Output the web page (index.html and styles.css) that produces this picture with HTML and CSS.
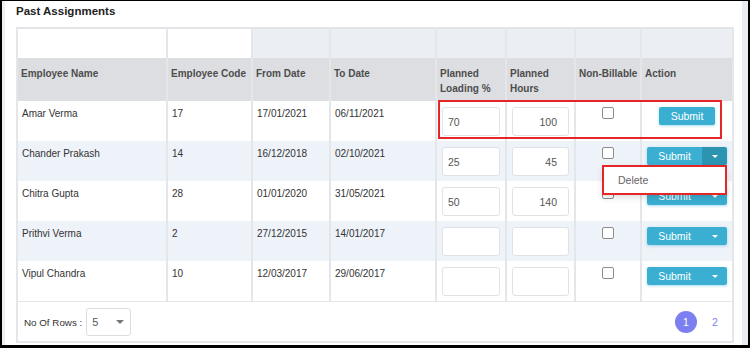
FILE: index.html
```html
<!DOCTYPE html>
<html lang="en">
<head>
  <meta charset="UTF-8">
  <meta name="viewport" content="width=device-width, initial-scale=1.0">
  <title>Past Assignments</title>
  <link rel="stylesheet" href="styles.css">
</head>
<body>
  <div class="frame">
    <div class="edge-left"></div>

    <main class="panel">
      <h2 class="title">Past Assignments</h2>

      <div class="grid-wrap">
        <table class="grid">
          <colgroup>
            <col style="width:150px">
            <col style="width:85px">
            <col style="width:78px">
            <col style="width:106px">
            <col style="width:70px">
            <col style="width:69px">
            <col style="width:66px">
            <col style="width:92px">
          </colgroup>
          <thead>
            <tr class="filter-row">
              <th class="blank"></th>
              <th class="blank"></th>
              <th></th>
              <th></th>
              <th></th>
              <th></th>
              <th></th>
              <th></th>
            </tr>
            <tr class="head-row">
              <th>Employee Name</th>
              <th class="nowrap">Employee Code</th>
              <th>From Date</th>
              <th>To Date</th>
              <th>Planned Loading %</th>
              <th>Planned Hours</th>
              <th class="nowrap">Non-Billable</th>
              <th>Action</th>
            </tr>
          </thead>
          <tbody>
            <tr>
              <td>Amar Verma</td>
              <td>17</td>
              <td>17/01/2021</td>
              <td>06/11/2021</td>
              <td class="in-cell"><input class="field" type="text" value="70"></td>
              <td class="in-cell"><input class="field field-right" type="text" value="100"></td>
              <td class="center"><input class="check" type="checkbox"></td>
              <td class="center"><button class="btn btn-single">Submit</button></td>
            </tr>
            <tr>
              <td>Chander Prakash</td>
              <td>14</td>
              <td>16/12/2018</td>
              <td>02/10/2021</td>
              <td class="in-cell"><input class="field" type="text" value="25"></td>
              <td class="in-cell"><input class="field field-right" type="text" value="45"></td>
              <td class="center"><input class="check" type="checkbox"></td>
              <td class="center">
                <div class="split split-open">
                  <button class="btn btn-main">Submit</button>
                  <button class="btn btn-caret"><span class="caret"></span></button>
                  <div class="menu">
                    <div class="menu-item">Delete</div>
                  </div>
                </div>
              </td>
            </tr>
            <tr>
              <td>Chitra Gupta</td>
              <td>28</td>
              <td>01/01/2020</td>
              <td>31/05/2021</td>
              <td class="in-cell"><input class="field" type="text" value="50"></td>
              <td class="in-cell"><input class="field field-right" type="text" value="140"></td>
              <td class="center"><input class="check" type="checkbox"></td>
              <td class="center">
                <div class="split">
                  <button class="btn btn-main">Submit</button>
                  <button class="btn btn-caret"><span class="caret"></span></button>
                </div>
              </td>
            </tr>
            <tr>
              <td>Prithvi Verma</td>
              <td>2</td>
              <td>27/12/2015</td>
              <td>14/01/2017</td>
              <td class="in-cell"><input class="field" type="text"></td>
              <td class="in-cell"><input class="field field-right" type="text"></td>
              <td class="center"><input class="check" type="checkbox"></td>
              <td class="center">
                <div class="split">
                  <button class="btn btn-main">Submit</button>
                  <button class="btn btn-caret"><span class="caret"></span></button>
                </div>
              </td>
            </tr>
            <tr>
              <td>Vipul Chandra</td>
              <td>10</td>
              <td>12/03/2017</td>
              <td>29/06/2017</td>
              <td class="in-cell"><input class="field" type="text"></td>
              <td class="in-cell"><input class="field field-right" type="text"></td>
              <td class="center"><input class="check" type="checkbox"></td>
              <td class="center">
                <div class="split">
                  <button class="btn btn-main">Submit</button>
                  <button class="btn btn-caret"><span class="caret"></span></button>
                </div>
              </td>
            </tr>
          </tbody>
        </table>

        <div class="grid-footer">
          <div class="rows">
            <span>No Of Rows :</span>
            <div class="rows-select">
              <span>5</span>
              <span class="caret caret-grey"></span>
            </div>
          </div>
          <div class="pager">
            <span class="page page-active">1</span>
            <span class="page">2</span>
          </div>
        </div>

        <!-- highlight round the first row -->
        <div class="mark mark-row"></div>
      </div>
    </main>

    <div class="edge-right"></div>
  </div>
</body>
</html>
```

FILE: styles.css
```css
* {
  box-sizing: border-box;
}
body {
  margin: 0;
  font-family: "Liberation Sans", Arial, sans-serif;
  background-color: #fff;
}
.frame {
  display: flex;
  width: 750px;
  height: 348px;
  border: solid #000;
  border-width: 1px 2px 3px 2px;
  background-color: #fff;
}
.edge-left {
  width: 3px;
  background-color: #eceef1;
}
.edge-right {
  width: 6px;
  background-color: #e9ecf3;
}
.panel {
  flex: 1;
  padding: 3px 8px 0 11px;
}
.title {
  margin: 0 0 9px;
  font-size: 11.5px;
  line-height: 14px;
  font-weight: bold;
  color: #222;
}
.grid-wrap {
  position: relative;
  width: 718px;
}
.grid {
  width: 716px;
  table-layout: fixed;
  border-collapse: collapse;
  font-size: 10px;
  color: #333;
}
.grid th,
.grid td {
  border-left: 2px solid #e4e6ea;
  border-right: 2px solid #e4e6ea;
  text-align: left;
  vertical-align: top;
}
.filter-row th {
  height: 30px;
  background-color: #ebeef2;
  border-top: 2px solid #e2e4e8;
}
.filter-row th.blank {
  background-color: #fff;
}
.head-row th {
  height: 43px;
  padding: 8px 3px 0;
  background-color: #dcdee1;
  font-size: 10px;
  line-height: 15px;
  font-weight: bold;
  color: #4d4d4d;
}
.nowrap {
  white-space: nowrap;
}
.grid td {
  height: 40px;
  padding: 7px 4px 0;
  line-height: 12px;
}
.grid tbody tr:nth-child(even) td {
  background-color: #eef2f9;
}
.grid td.in-cell {
  padding: 6px 5px 0;
}
.grid td.center {
  text-align: center;
  padding: 6px 2px 0;
}
.field {
  display: block;
  width: 100%;
  height: 29px;
  padding: 0 5px;
  border: 1px solid #e0e2e6;
  border-radius: 3px;
  background-color: #fff;
  font-family: inherit;
  font-size: 10.5px;
  color: #555;
}
.field-right {
  text-align: right;
  padding-right: 11px;
}
.check {
  appearance: none;
  width: 12px;
  height: 12px;
  margin: 0;
  border: 1px solid #8c8c8c;
  border-radius: 2px;
  background-color: #fff;
}
.btn {
  height: 18px;
  border: 0;
  background-color: #3aafd2;
  color: #fff;
  font-family: inherit;
  font-size: 10.5px;
  line-height: 18px;
  padding: 0;
  cursor: pointer;
}
.btn-single {
  width: 56px;
  border-radius: 2px;
  box-shadow: 0 1px 3px rgba(58, 175, 210, 0.45);
}
.split {
  position: relative;
  display: inline-flex;
  border-radius: 2px;
  box-shadow: 0 1px 3px rgba(58, 175, 210, 0.45);
}
.btn-main {
  width: 55px;
  border-radius: 2px 0 0 2px;
}
.btn-caret {
  width: 25px;
  border-radius: 0 2px 2px 0;
  display: flex;
  align-items: center;
  justify-content: center;
}
.split-open .btn-caret {
  background-color: #2c93b1;
}
.caret {
  display: inline-block;
  width: 0;
  height: 0;
  border-left: 3px solid transparent;
  border-right: 3px solid transparent;
  border-top: 3px solid #fff;
}
.caret-grey {
  border-top-color: #777;
  border-left-width: 4px;
  border-right-width: 4px;
  border-top-width: 4px;
}
.menu {
  position: absolute;
  top: 100%;
  right: 0;
  z-index: 2;
  width: 125px;
  height: 30px;
  border: 2px solid #e52628;
  background-color: #fff;
  box-shadow: 0 3px 6px rgba(0, 0, 0, 0.12);
  text-align: left;
}
.menu-item {
  padding-left: 14px;
  line-height: 26px;
  font-size: 10.5px;
  color: #666;
}
.grid-footer {
  display: flex;
  align-items: center;
  justify-content: space-between;
  width: 718px;
  height: 42px;
  padding: 1px 6px 0 6px;
  border: 2px solid #e4e6ea;
  border-top-width: 1px;
  font-size: 9.8px;
  color: #333;
}
.rows {
  display: flex;
  align-items: center;
  gap: 4px;
}
.rows-select {
  display: flex;
  align-items: center;
  justify-content: space-between;
  width: 45px;
  height: 28px;
  padding: 0 6px 0 5px;
  border: 1px solid #dcdde0;
  border-radius: 3px;
  font-size: 11px;
  color: #555;
}
.pager {
  display: flex;
  gap: 7px;
}
.page {
  width: 22px;
  height: 22px;
  border-radius: 50%;
  display: flex;
  align-items: center;
  justify-content: center;
  font-size: 10.5px;
  color: #7d82ee;
}
.page-active {
  background-color: #7b7ff0;
  color: #fff;
}
.mark {
  position: absolute;
  border: 2px solid #e52628;
}
.mark-row {
  left: 422px;
  top: 73px;
  width: 284px;
  height: 39px;
}
```
